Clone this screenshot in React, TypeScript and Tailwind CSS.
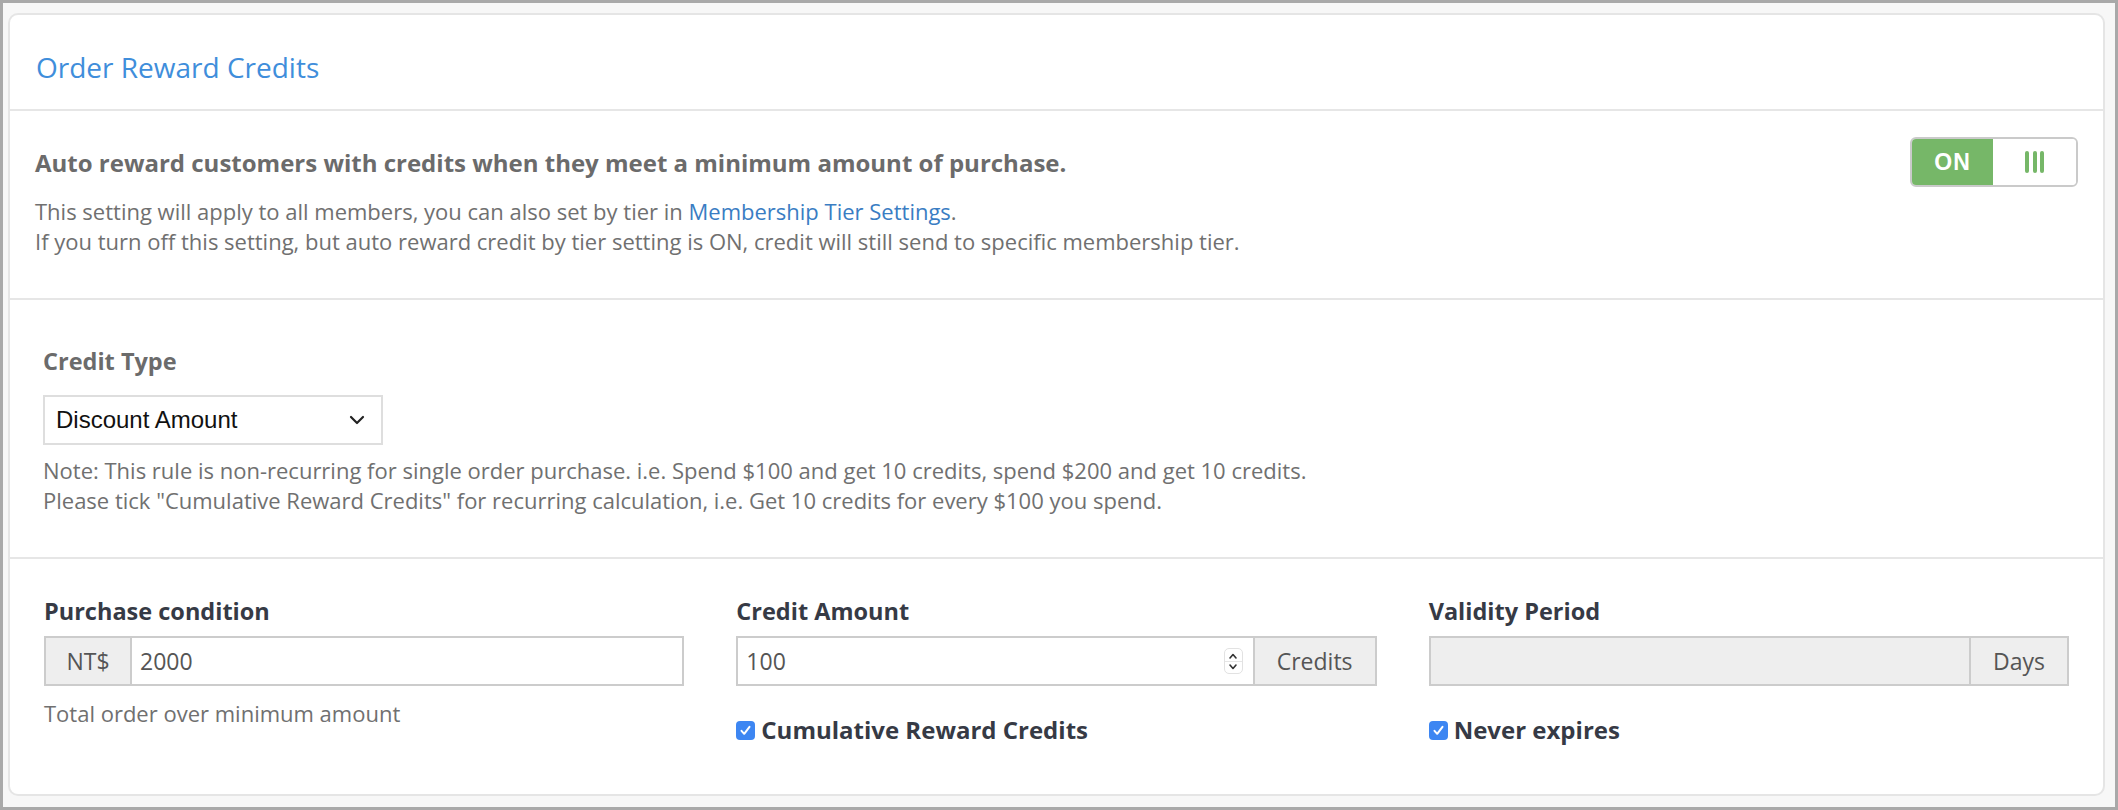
import React from "react";

const font = "font-['Open_Sans',sans-serif]";

function CheckBox() {
  return (
    <span className="flex h-[19px] w-[19px] shrink-0 items-center justify-center rounded-[4px] bg-[#3d86f2]">
      <svg width="13" height="13" viewBox="0 0 13 13" fill="none">
        <path d="M2.5 6.8 L5.2 9.8 L10.5 2.8" stroke="white" strokeWidth="2" strokeLinecap="round" strokeLinejoin="round" />
      </svg>
    </span>
  );
}

function Spinner() {
  return (
    <span className="mr-[4px] flex h-[26px] w-[19px] flex-col items-center justify-center rounded-[5px] border border-[#e2e2e2] bg-white">
      <svg width="10" height="8" viewBox="0 0 10 8" fill="none">
        <path d="M2 6 L5 2.5 L8 6" stroke="#333" strokeWidth="1.6" strokeLinecap="round" strokeLinejoin="round" />
      </svg>
      <span className="my-[1px] h-px w-full bg-[#e6e6e6]" />
      <svg width="10" height="8" viewBox="0 0 10 8" fill="none">
        <path d="M2 2 L5 5.5 L8 2" stroke="#333" strokeWidth="1.6" strokeLinecap="round" strokeLinejoin="round" />
      </svg>
    </span>
  );
}

export default function App() {
  return (
    <div className={`${font} box-border h-[810px] w-full border-[3px] border-[#a9a9a9] bg-[#f7f7f7] pb-[11px] pl-[5px] pr-[10px] pt-[10px]`}>
      <div className="box-border flex h-full flex-col rounded-[10px] border-2 border-[#e5e5e5] bg-white">
        {/* HEADER */}
        <div className="flex h-[96px] items-center border-b-2 border-[#e6e6e6] pl-[26px] pt-[10px]">
          <h1 className="text-[28px] font-normal text-[#3f8edb]">Order Reward Credits</h1>
        </div>

        {/* AUTO REWARD */}
        <div className="flex items-start justify-between border-b-2 border-[#e6e6e6] pb-[42px] pl-[25px] pr-[25px] pt-[26px]">
          <div className="mt-[11px]">
            <p className="text-[24px] font-bold leading-[30px] text-[#6b6b6b]">
              Auto reward customers with credits when they meet a minimum amount of purchase.
            </p>
            <p className="mt-[18px] text-[22px] leading-[30px] text-[#707070]">
              This setting will apply to all members, you can also set by tier in{" "}
              <a className="text-[#3a7dc3]">Membership Tier Settings</a>.
              <br />
              If you turn off this setting, but auto reward credit by tier setting is ON, credit will still send to specific membership tier.
            </p>
          </div>

          <div className="box-border flex h-[50px] w-[168px] shrink-0 overflow-hidden rounded-[6px] border-2 border-[#cacaca]">
            <div className="flex w-[81px] items-center justify-center bg-[#76b768] font-['Liberation_Sans',sans-serif] text-[23px] font-bold tracking-[1px] text-white">
              ON
            </div>
            <div className="flex flex-1 items-center justify-center gap-[3.5px] bg-white">
              <span className="h-[22px] w-[4px] rounded-[2px] bg-[#76b768]" />
              <span className="h-[22px] w-[4px] rounded-[2px] bg-[#76b768]" />
              <span className="h-[22px] w-[4px] rounded-[2px] bg-[#76b768]" />
            </div>
          </div>
        </div>

        {/* CREDIT TYPE */}
        <div className="border-b-2 border-[#e6e6e6] pb-[42px] pl-[33px] pr-[34px] pt-[46px]">
          <p className="text-[23.5px] font-bold leading-[30px] text-[#6b6b6b]">Credit Type</p>
          <div className="mt-[19px] box-border flex h-[50px] w-[340px] items-center justify-between border-2 border-[#dedede] pl-[11px] pr-[16px]">
            <span className="font-['Liberation_Sans',sans-serif] text-[24px] text-[#111]">Discount Amount</span>
            <svg width="16" height="10" viewBox="0 0 16 10" fill="none">
              <path d="M2 2 L8 8 L14 2" stroke="#222" strokeWidth="2.2" strokeLinecap="round" strokeLinejoin="round" />
            </svg>
          </div>
          <p className="mt-[10px] text-[22px] leading-[30px] text-[#707070]">
            Note: This rule is non-recurring for single order purchase. i.e. Spend $100 and get 10 credits, spend $200 and get 10 credits.
            <br />
            Please tick "Cumulative Reward Credits" for recurring calculation, i.e. Get 10 credits for every $100 you spend.
          </p>
        </div>

        {/* CONDITIONS */}
        <div className="grid grid-cols-3 gap-x-[52px] px-[34px] pt-[37px]">
          <div>
            <p className="text-[23.5px] font-bold leading-[30px] text-[#363a45]">Purchase condition</p>
            <div className="mt-[10px] box-border flex h-[50px] border-2 border-[#cccccc] text-[23px] text-[#555]">
              <span className="flex w-[86px] items-center justify-center border-r-2 border-[#cccccc] bg-[#eeeeee]">NT$</span>
              <span className="flex flex-1 items-center bg-white pl-[8px]">2000</span>
            </div>
            <p className="mt-[12px] text-[22px] leading-[30px] text-[#707070]">Total order over minimum amount</p>
          </div>

          <div>
            <p className="text-[23.5px] font-bold leading-[30px] text-[#363a45]">Credit Amount</p>
            <div className="mt-[10px] box-border flex h-[50px] border-2 border-[#cccccc] text-[23px] text-[#555]">
              <span className="flex flex-1 items-center justify-between bg-white pl-[8px] pr-[6px]">
                100
                <Spinner />
              </span>
              <span className="flex w-[122px] items-center justify-center border-l-2 border-[#cccccc] bg-[#eeeeee]">Credits</span>
            </div>
            <label className="mt-[29px] flex items-center gap-[6px]">
              <CheckBox />
              <span className="text-[24px] font-bold leading-[30px] text-[#363a45]">Cumulative Reward Credits</span>
            </label>
          </div>

          <div>
            <p className="text-[23.5px] font-bold leading-[30px] text-[#363a45]">Validity Period</p>
            <div className="mt-[10px] box-border flex h-[50px] border-2 border-[#cccccc] bg-[#eeeeee] text-[23px] text-[#555]">
              <span className="flex-1" />
              <span className="flex w-[98px] items-center justify-center border-l-2 border-[#cccccc]">Days</span>
            </div>
            <label className="mt-[29px] flex items-center gap-[6px]">
              <CheckBox />
              <span className="text-[24px] font-bold leading-[30px] text-[#363a45]">Never expires</span>
            </label>
          </div>
        </div>
      </div>
    </div>
  );
}
